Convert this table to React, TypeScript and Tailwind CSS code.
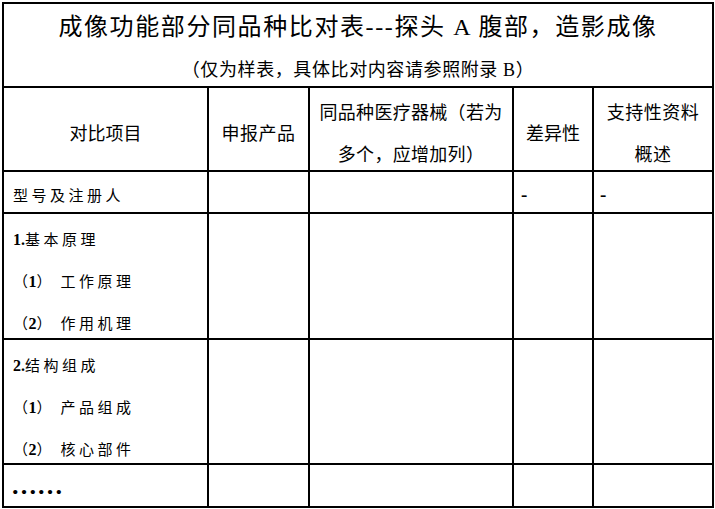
import React from "react";

const Cjk = ({ children }: { children: React.ReactNode }) => (
  <span className="tracking-[3.5px]">{children}</span>
);

const Num = ({ n, rest }: { n: string; rest: string }) => (
  <>
    <span className="tracking-[0.5px]">（</span>
    <span className="text-[16px] font-bold">{n}</span>
    <span className="tracking-[9px]">）</span>
    <Cjk>{rest}</Cjk>
  </>
);

function BodyLines({ lines }: { lines: React.ReactNode[] }) {
  return (
    <div className="bg-white pl-[9px] pt-[5px] text-[15px] leading-[41px] text-black">
      {lines.map((l, i) => (
        <div key={i} className="whitespace-nowrap">
          {l}
        </div>
      ))}
    </div>
  );
}

export default function App() {
  return (
    <div className="min-h-[509px] w-[715px] bg-white pl-[2px] pt-[2px] font-['Liberation_Serif','Noto_Sans_CJK_SC',sans-serif] text-black">
      <div className="grid w-[712px] grid-cols-[203px_99px_202px_78px_118px] grid-rows-[82px_82px_40px_124px_123px_41px] gap-[2px] bg-black p-[2px]">
        {/* Title */}
        <div className="col-span-5 bg-white text-center">
          <div className="whitespace-nowrap text-[24px] leading-[46px] tracking-[1.6px]">
            成像功能部分同品种比对表---探头 A 腹部，造影成像
          </div>
          <div className="whitespace-nowrap text-[18px] leading-[41px] tracking-[0.6px]">
            （仅为样表，具体比对内容请参照附录 B）
          </div>
        </div>

        {/* Header row */}
        <div className="flex items-center justify-center bg-white pt-[10px] text-center text-[18px] leading-[42px]">
          对比项目
        </div>
        <div className="flex items-center justify-center bg-white pt-[10px] text-center text-[18px] leading-[42px] tracking-[0.5px]">
          申报产品
        </div>
        <div className="flex items-center justify-center bg-white pt-[10px] text-center text-[18px] leading-[42px] tracking-[0.3px]">
          <div>
            同品种医疗器械（若为
            <br />
            多个，应增加列）
          </div>
        </div>
        <div className="flex items-center justify-center bg-white pt-[10px] text-center text-[18px] leading-[42px]">
          差异性
        </div>
        <div className="flex items-center justify-center bg-white pt-[10px] text-center text-[18px] leading-[42px] tracking-[0.5px]">
          <div>
            支持性资料
            <br />
            概述
          </div>
        </div>

        {/* Row 1 */}
        <div className="bg-white pl-[9px] pt-[4px] text-[15px] leading-[40px]">
          <Cjk>型号及注册人</Cjk>
        </div>
        <div className="bg-white" />
        <div className="bg-white" />
        <div className="bg-white pl-[7px] pt-[3px] text-[19px] font-bold leading-[40px]">-</div>
        <div className="bg-white pl-[6px] pt-[3px] text-[19px] font-bold leading-[40px]">-</div>

        {/* Row 2 */}
        <BodyLines
          lines={[
            <>
              <span className="text-[16px] font-bold">1.</span>
              <Cjk>基本原理</Cjk>
            </>,
            <Num n="1" rest="工作原理" />,
            <Num n="2" rest="作用机理" />,
          ]}
        />
        <div className="bg-white" />
        <div className="bg-white" />
        <div className="bg-white" />
        <div className="bg-white" />

        {/* Row 3 */}
        <BodyLines
          lines={[
            <>
              <span className="text-[16px] font-bold">2.</span>
              <Cjk>结构组成</Cjk>
            </>,
            <Num n="1" rest="产品组成" />,
            <Num n="2" rest="核心部件" />,
          ]}
        />
        <div className="bg-white" />
        <div className="bg-white" />
        <div className="bg-white" />
        <div className="bg-white" />

        {/* Row 4 */}
        <div className="bg-white pl-[7px] font-['Liberation_Serif',serif] text-[26px] font-bold leading-[41px]">
          ……
        </div>
        <div className="bg-white" />
        <div className="bg-white" />
        <div className="bg-white" />
        <div className="bg-white" />
      </div>
    </div>
  );
}
